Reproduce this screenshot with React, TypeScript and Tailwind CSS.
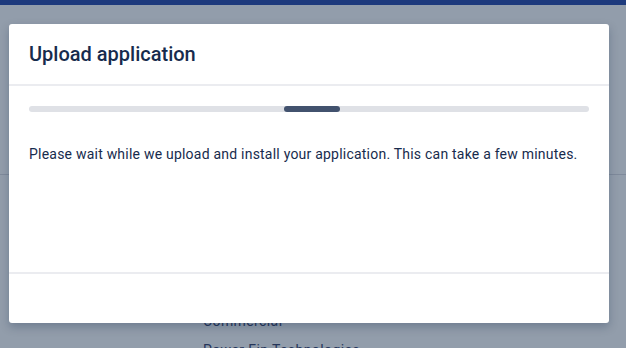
import React from "react";

export default function App(): React.ReactElement {
    return (
        <div
            className="relative h-[348px] w-[626px] overflow-hidden bg-[#929dab]"
            style={{ fontFamily: "Roboto, 'Liberation Sans', sans-serif" }}
        >
            {/* Page behind the dialog, already dimmed */}
            <div className="h-[5px] bg-[#1d3a7d]" />
            <div className="mt-[169px] h-px bg-[#7f8a9b]" />
            <div className="ml-[203px] mt-[136px] flex flex-col gap-[9px] text-sm tracking-[0.4px] text-[#26365a]">
                <span>Commercial</span>
                <span>Power Fin Technologies</span>
            </div>

            {/* Dialog */}
            <div className="absolute left-[9px] top-[24px] flex h-[299px] w-[600px] flex-col rounded-[3px] bg-white shadow-[0_4px_10px_rgba(9,30,66,0.25)]">
                <div className="flex h-[62px] items-center border-b-2 border-[#ebecf0] px-5">
                    <h1 className="text-[20px] font-medium text-[#172b4d]">Upload application</h1>
                </div>
                <div className="flex-1 px-5 pt-5">
                    <div className="relative h-[6px] rounded-full bg-[#dfe1e6]">
                        <div className="absolute left-[255px] top-0 h-[6px] w-[56px] rounded-full bg-[#42526e]" />
                    </div>
                    <p className="mt-[32px] text-sm tracking-[0.22px] text-[#172b4d]">
                        Please wait while we upload and install your application. This can take a few minutes.
                    </p>
                </div>
                <div className="h-[51px] border-t-2 border-[#ebecf0]" />
            </div>
        </div>
    );
}
